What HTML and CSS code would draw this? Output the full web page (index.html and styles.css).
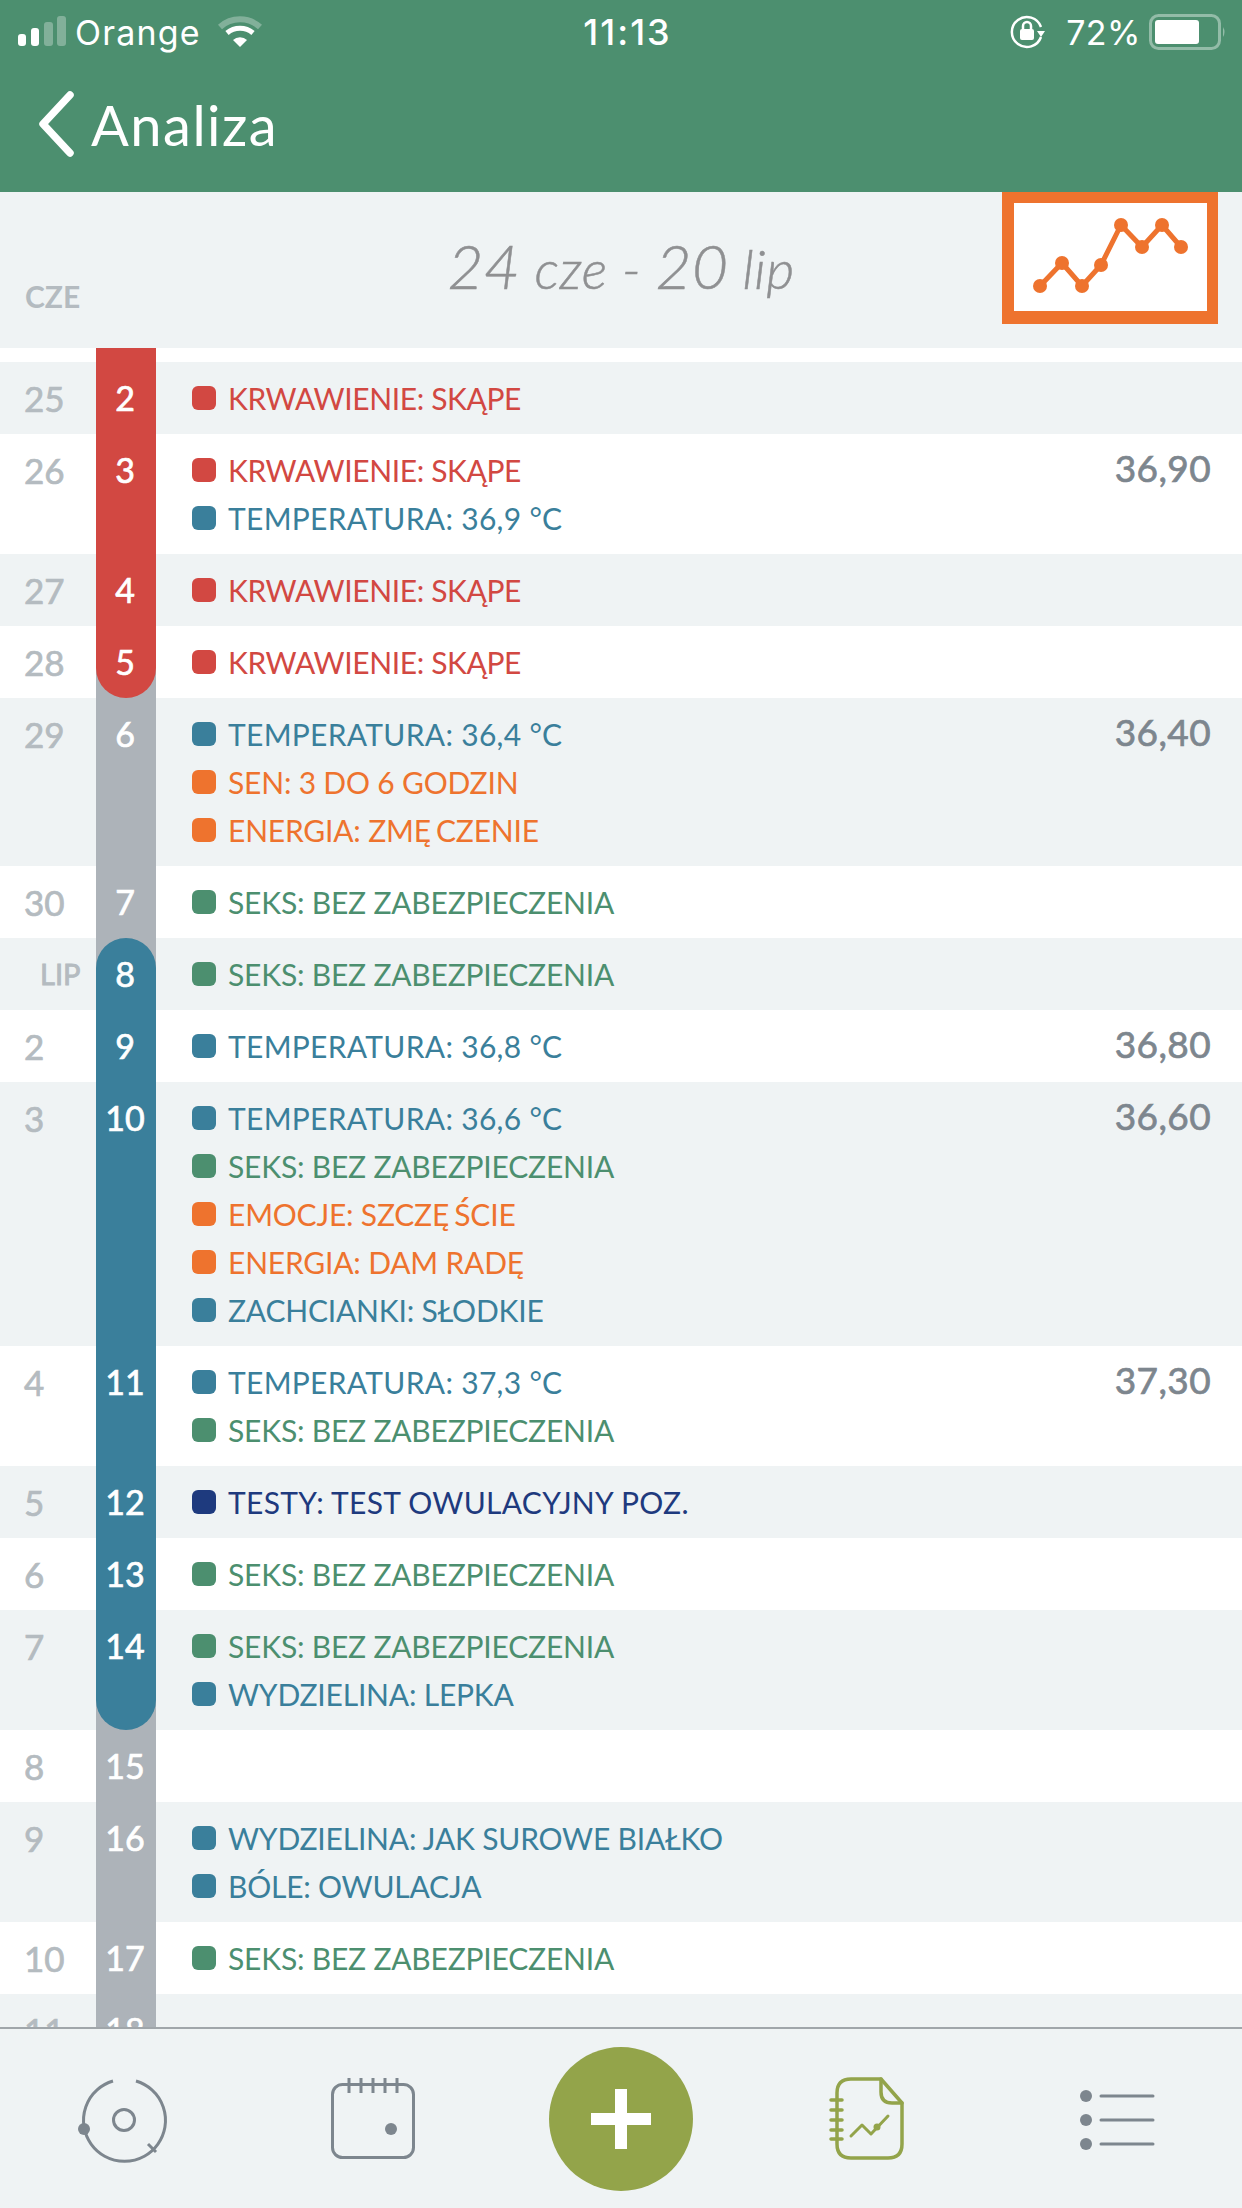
FILE: index.html
```html
<!DOCTYPE html>
<html lang="pl">
<head>
  <meta charset="UTF-8" />
  <meta name="viewport" content="width=device-width, initial-scale=1.0"/>
  <title>Analiza</title>
  <link rel="stylesheet" href="styles.css">
</head>
<body>

  <div class="app">
    <header class="top">
      <div class="status">
        <div class="status-left">
          <svg class="signal" width="50" height="32" viewBox="0 0 50 32">
            <rect x="0" y="18" width="8" height="12" rx="3" fill="#fff"/>
            <rect x="13" y="12" width="8" height="18" rx="3" fill="#fff"/>
            <rect x="26" y="6" width="9" height="24" rx="3" fill="#fff" opacity=".3"/>
            <rect x="39" y="0" width="9" height="30" rx="3" fill="#fff" opacity=".3"/>
          </svg>
          <span class="carrier">Orange</span>
          <svg class="wifi" width="44" height="32" viewBox="0 0 44 32">
            <path d="M2 11 A30 30 0 0 1 42 11" fill="none" stroke="#fff" stroke-opacity=".3" stroke-width="6"/>
            <path d="M9 17 A20 20 0 0 1 35 17" fill="none" stroke="#fff" stroke-width="5"/>
            <path d="M15 24 L22 31 L29 24 A10 10 0 0 0 15 24 Z" fill="#fff"/>
          </svg>
        </div>
        <div class="clock">11:13</div>
        <div class="status-right">
          <svg class="lock" width="36" height="36" viewBox="0 0 36 36">
            <path d="M31 23 A15 15 0 1 1 31 13" fill="none" stroke="#fff" stroke-width="2.5"/>
            <path d="M27 17 H35 L31 23 Z" fill="#fff"/>
            <path d="M13 15 V12 A4 4 0 0 1 21 12 V15" fill="none" stroke="#fff" stroke-width="2.5"/>
            <rect x="10" y="15" width="14" height="11" rx="2" fill="#fff"/>
          </svg>
          <span class="percent">72%</span>
          <svg class="battery" width="78" height="36" viewBox="0 0 78 36">
            <rect x="1.5" y="1.5" width="69" height="33" rx="8" fill="none" stroke="#fff" stroke-opacity=".4" stroke-width="3"/>
            <rect x="6" y="6" width="44" height="24" rx="3" fill="#fff"/>
            <path d="M74 13 Q77 18 74 23 Z" fill="#fff" fill-opacity=".4"/>
          </svg>
        </div>
      </div>
      <div class="nav">
        <svg class="back" width="40" height="66" viewBox="0 0 40 66">
          <path d="M34 4 L7 33 L34 62" fill="none" stroke="#fff" stroke-width="7.5" stroke-linecap="round" stroke-linejoin="round"/>
        </svg>
        <span class="nav-title">Analiza</span>
      </div>
    </header>

    <div class="range">
      <span class="month">CZE</span>
      <h1 class="range-title"><b>24</b> cze - <b>20</b> lip</h1>
      <div class="chart-box">
        <svg width="193" height="108" viewBox="0 0 193 108">
          <polyline points="26,83 48,60 68,83 87,62 107,22 128,44 148,22 167,44" fill="none" stroke="#ee732e" stroke-width="5"/>
          <g fill="#ee732e">
            <circle cx="26" cy="83" r="7"/><circle cx="48" cy="60" r="7"/>
            <circle cx="68" cy="83" r="7"/><circle cx="87" cy="62" r="7"/>
            <circle cx="107" cy="22" r="7"/><circle cx="128" cy="44" r="7"/>
            <circle cx="148" cy="22" r="7"/><circle cx="167" cy="44" r="7"/>
          </g>
        </svg>
      </div>
    </div>

    <div class="list">
      <div class="row-gap">
        <div class="strip"><span class="day red"></span></div>
      </div>

      <div class="row grey">
        <div class="date">25</div>
        <div class="strip"><span class="day red">2</span></div>
        <ul class="events">
          <li class="c-red tight">KRWAWIENIE: SKĄPE</li>
        </ul>
      </div>

      <div class="row">
        <div class="date">26</div>
        <div class="strip"><span class="day red">3</span></div>
        <ul class="events">
          <li class="c-red tight">KRWAWIENIE: SKĄPE</li>
          <li class="c-blue loose">TEMPERATURA: 36,9 °C</li>
        </ul>
        <div class="temp">36,90</div>
      </div>

      <div class="row grey">
        <div class="date">27</div>
        <div class="strip"><span class="day red">4</span></div>
        <ul class="events">
          <li class="c-red tight">KRWAWIENIE: SKĄPE</li>
        </ul>
      </div>

      <div class="row">
        <div class="date">28</div>
        <div class="strip"><span class="day red round-bottom">5</span></div>
        <ul class="events">
          <li class="c-red tight">KRWAWIENIE: SKĄPE</li>
        </ul>
      </div>

      <div class="row grey">
        <div class="date">29</div>
        <div class="strip"><span class="day">6</span></div>
        <ul class="events">
          <li class="c-blue loose">TEMPERATURA: 36,4 °C</li>
          <li class="c-orange">SEN: 3 DO 6 GODZIN</li>
          <li class="c-orange"><span>ENERGIA: ZM<span class="wide">Ę</span>CZENIE</span></li>
        </ul>
        <div class="temp">36,40</div>
      </div>

      <div class="row">
        <div class="date">30</div>
        <div class="strip"><span class="day">7</span></div>
        <ul class="events">
          <li class="c-green">SEKS: BEZ ZABEZPIECZENIA</li>
        </ul>
      </div>

      <div class="row grey">
        <div class="date date-month">LIP</div>
        <div class="strip"><span class="day blue round-top">8</span></div>
        <ul class="events">
          <li class="c-green">SEKS: BEZ ZABEZPIECZENIA</li>
        </ul>
      </div>

      <div class="row">
        <div class="date">2</div>
        <div class="strip"><span class="day blue">9</span></div>
        <ul class="events">
          <li class="c-blue loose">TEMPERATURA: 36,8 °C</li>
        </ul>
        <div class="temp">36,80</div>
      </div>

      <div class="row grey">
        <div class="date">3</div>
        <div class="strip"><span class="day blue">10</span></div>
        <ul class="events">
          <li class="c-blue loose">TEMPERATURA: 36,6 °C</li>
          <li class="c-green">SEKS: BEZ ZABEZPIECZENIA</li>
          <li class="c-orange"><span>EMOCJE: SZCZ<span class="wide">Ę</span>ŚCIE</span></li>
          <li class="c-orange">ENERGIA: DAM RADĘ</li>
          <li class="c-blue">ZACHCIANKI: SŁODKIE</li>
        </ul>
        <div class="temp">36,60</div>
      </div>

      <div class="row">
        <div class="date">4</div>
        <div class="strip"><span class="day blue">11</span></div>
        <ul class="events">
          <li class="c-blue loose">TEMPERATURA: 37,3 °C</li>
          <li class="c-green">SEKS: BEZ ZABEZPIECZENIA</li>
        </ul>
        <div class="temp">37,30</div>
      </div>

      <div class="row grey">
        <div class="date">5</div>
        <div class="strip"><span class="day blue">12</span></div>
        <ul class="events">
          <li class="c-navy loose">TESTY: TEST OWULACYJNY POZ.</li>
        </ul>
      </div>

      <div class="row">
        <div class="date">6</div>
        <div class="strip"><span class="day blue">13</span></div>
        <ul class="events">
          <li class="c-green">SEKS: BEZ ZABEZPIECZENIA</li>
        </ul>
      </div>

      <div class="row grey">
        <div class="date">7</div>
        <div class="strip"><span class="day blue round-bottom">14</span></div>
        <ul class="events">
          <li class="c-green">SEKS: BEZ ZABEZPIECZENIA</li>
          <li class="c-blue">WYDZIELINA: LEPKA</li>
        </ul>
      </div>

      <div class="row">
        <div class="date">8</div>
        <div class="strip"><span class="day">15</span></div>
        <ul class="events"></ul>
      </div>

      <div class="row grey">
        <div class="date">9</div>
        <div class="strip"><span class="day">16</span></div>
        <ul class="events">
          <li class="c-blue">WYDZIELINA: JAK SUROWE BIAŁKO</li>
          <li class="c-blue">BÓLE: OWULACJA</li>
        </ul>
      </div>

      <div class="row">
        <div class="date">10</div>
        <div class="strip"><span class="day">17</span></div>
        <ul class="events">
          <li class="c-green">SEKS: BEZ ZABEZPIECZENIA</li>
        </ul>
      </div>

      <div class="row grey">
        <div class="date">11</div>
        <div class="strip"><span class="day">18</span></div>
        <ul class="events"></ul>
      </div>
    </div>

    <nav class="tabs">
      <div class="tab">
        <svg width="120" height="120" viewBox="0 0 120 120" fill="none" stroke="#7d868e" stroke-width="3">
          <path d="M49 22 A41 41 0 1 0 72 22"/>
          <circle cx="60" cy="61" r="10.5"/>
          <path d="M84 85 L92 93"/>
          <circle cx="20" cy="70" r="6" fill="#7d868e" stroke="none"/>
        </svg>
      </div>
      <div class="tab">
        <svg width="120" height="120" viewBox="0 0 120 120" fill="none" stroke="#7d868e" stroke-width="3">
          <rect x="19.500" y="25.500" width="81" height="73" rx="10"/>
          <path d="M36 19 V34 M48 19 V34 M60 19 V34 M72 19 V34 M84 19 V34"/>
          <circle cx="78" cy="70" r="6" fill="#7d868e" stroke="none"/>
        </svg>
      </div>
      <div class="tab">
        <div class="add"></div>
      </div>
      <div class="tab">
        <svg width="120" height="120" viewBox="0 0 120 120" fill="none" stroke="#93a44a" stroke-width="3.500" stroke-linecap="round" stroke-linejoin="round">
          <path d="M72 20 H42 Q28 20 28 34 V85 Q28 99 42 99 H79 Q93 99 93 85 V44 Z"/>
          <path d="M72 20 V33 Q72 44 83 44 H93"/>
          <path d="M22 41 H33 M22 51 H33 M22 61 H33 M22 71 H33 M22 80 H33"/>
          <path d="M42 77 L53 66 L62 75 L79 57" stroke-width="3"/>
          <circle cx="68" cy="68" r="3.500" fill="#93a44a" stroke="none"/>
        </svg>
      </div>
      <div class="tab">
        <svg width="120" height="120" viewBox="0 0 120 120" fill="#7d868e" stroke="#7d868e" stroke-width="3" stroke-linecap="round">
          <circle cx="28" cy="37" r="6" stroke="none"/>
          <circle cx="28" cy="61" r="6" stroke="none"/>
          <circle cx="28" cy="85" r="6" stroke="none"/>
          <path d="M43 37 H95 M43 61 H95 M43 85 H95"/>
        </svg>
      </div>
    </nav>
  </div>

</body>
</html>
```

FILE: styles.css
```css
body {
  margin: 0;
  font-family: Lato, "Noto Sans", sans-serif;
  background-color: #ffffff;
}

.app {
  display: flex;
  flex-direction: column;
  width: 1242px;
  height: 2208px;
  overflow: hidden;
}

/* green top */
.top {
  height: 192px;
  background-color: #4c8f6f;
  color: #ffffff;
}

.status {
  display: grid;
  grid-template-columns: 1fr auto 1fr;
  align-items: center;
  height: 64px;
  padding: 0 15px 0 18px;
  font-family: Inter, sans-serif;
  font-size: 34px;
}

.status-left,
.status-right {
  display: flex;
  align-items: center;
}

.status-right {
  justify-content: flex-end;
}

.carrier {
  margin-left: 7px;
  letter-spacing: 1.2px;
}

.wifi {
  margin-left: 17px;
}

.clock {
  padding-left: 10px;
  font-weight: 500;
  font-size: 36px;
  letter-spacing: 2px;
}

.percent {
  margin-left: 20px;
  letter-spacing: 0.5px;
}

.battery {
  margin-left: 8px;
}

.nav {
  display: flex;
  align-items: center;
  height: 120px;
  padding-left: 36px;
}

.nav-title {
  margin-left: 15px;
  font-size: 56px;
  letter-spacing: 1.5px;
}

/* date range bar */
.range {
  display: grid;
  grid-template-columns: 1fr auto 1fr;
  height: 156px;
  padding: 0 24px;
  background-color: #eff3f4;
}

.month {
  align-self: end;
  margin-bottom: 34px;
  margin-left: 1px;
  font-size: 30px;
  font-weight: 700;
  color: #b4bbc0;
}

.range-title {
  margin: 36px 0 0;
  font-size: 54px;
  font-weight: 300;
  font-style: italic;
  letter-spacing: 0.5px;
  color: #8f9092;
  -webkit-text-stroke: 0.5px #8f9092;
}

.range-title b {
  font-size: 62px;
  font-weight: 300;
}

.chart-box {
  justify-self: end;
  display: flex;
  box-sizing: border-box;
  width: 216px;
  height: 132px;
  padding: 11px 11px 13px 12px;
  background-color: #ee732e;
}

.chart-box svg {
  background-color: #ffffff;
}

/* day list */
.list {
  flex: 1;
  min-height: 0;
  overflow: hidden;
}

.row {
  display: flex;
  background-color: #ffffff;
}

.row.grey {
  background-color: #eff3f4;
}

.row-gap {
  display: flex;
  height: 14px;
  padding-left: 96px;
}

.date {
  box-sizing: border-box;
  width: 96px;
  padding: 12px 0 0 24px;
  font-size: 35px;
  line-height: 48px;
  font-weight: 400;
  color: #b4bbc0;
  -webkit-text-stroke: 0.7px #b4bbc0;
}

.date-month {
  padding-left: 40px;
  font-size: 29px;
  -webkit-text-stroke: 0.9px #b4bbc0;
}

.strip {
  display: flex;
  width: 60px;
  background-color: #adb3b9;
}

.day {
  flex: 1;
  box-sizing: border-box;
  padding: 12px 2px 0 0;
  font-size: 34px;
  line-height: 48px;
  font-weight: 400;
  color: #ffffff;
  text-align: center;
  -webkit-text-stroke: 0.7px #ffffff;
}

.day.red {
  background-color: #d24842;
}

.day.blue {
  background-color: #3a7f9b;
}

.round-top {
  border-radius: 30px 30px 0 0;
}

.round-bottom {
  border-radius: 0 0 30px 30px;
}

.events {
  flex: 1;
  min-height: 48px;
  margin: 0;
  padding: 12px 0 12px 36px;
  list-style: none;
}

.events li {
  display: flex;
  align-items: center;
  height: 48px;
  font-size: 30px;
  letter-spacing: -0.2px;
}

.events li.tight {
  letter-spacing: -0.38px;
}

.events li.loose {
  letter-spacing: 0.3px;
}

.events li::before {
  content: "";
  width: 24px;
  height: 24px;
  margin-right: 12px;
  border-radius: 6px;
  background-color: currentColor;
}

.wide {
  letter-spacing: 5px;
}

.c-red {
  color: #d24842;
}

.c-blue {
  color: #3a7f9b;
}

.c-orange {
  color: #ee732e;
}

.c-green {
  color: #4c8f6f;
}

.c-navy {
  color: #1e3a7e;
}

.temp {
  padding: 11px 31px 0 0;
  font-size: 37px;
  line-height: 46px;
  font-weight: 400;
  letter-spacing: 0.4px;
  color: #7d868e;
  -webkit-text-stroke: 0.7px #7d868e;
}

/* tab bar */
.tabs {
  display: grid;
  grid-template-columns: repeat(5, 1fr);
  align-items: center;
  height: 181px;
  border-top: 2px solid #a0a6aa;
  box-sizing: border-box;
  background-color: #eff3f4;
}

.tab {
  display: flex;
  justify-content: center;
}

.add {
  width: 144px;
  height: 144px;
  border-radius: 50%;
  background:
    linear-gradient(#ffffff, #ffffff) center / 60px 12px no-repeat,
    linear-gradient(#ffffff, #ffffff) center / 12px 60px no-repeat,
    #93a44a;
}
```
